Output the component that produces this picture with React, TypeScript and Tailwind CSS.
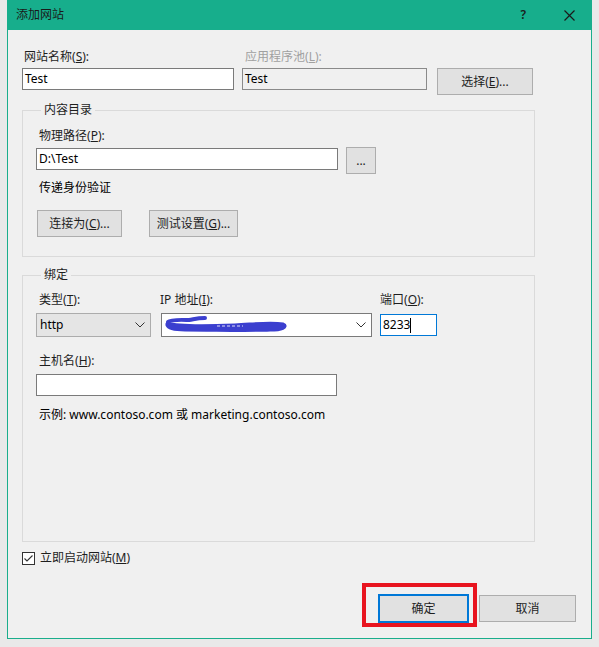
import React from 'react';

const Label = ({ text, k, tail = '):', dim = false, className = '' }: { text: string; k: string; tail?: string; dim?: boolean; className?: string }) => (
  <div className={`h-[16px] leading-[16px] whitespace-nowrap ${dim ? 'text-[#a0a0a0]' : 'text-[#1e1e1e]'} ${className}`}>
    {text}(<u>{k}</u>{tail}
  </div>
);

const Chevron = () => (
  <svg width="10" height="6" viewBox="0 0 10 6" className="shrink-0">
    <path d="M0.5 0.5 L5 5 L9.5 0.5" fill="none" stroke="#333" strokeWidth="1" />
  </svg>
);

function Btn({ children, className = '' }: { children: React.ReactNode; className?: string }) {
  return (
    <div className={`h-[27px] flex items-center justify-center bg-[#e1e1e1] border border-[#adadad] text-[#1e1e1e] whitespace-nowrap ${className}`}>
      {children}
    </div>
  );
}

export default function App() {
  return (
    <div className="w-[599px] h-[647px] bg-[#e9e9e9] overflow-hidden font-['Noto_Sans','Noto_Sans_CJK_SC',sans-serif] text-[12px]">
      <div className="ml-[7px] w-[585px] h-[639px] flex flex-col bg-[#f0f0f0] border-x border-b border-[#1aae8c]">
        {/* Title bar */}
        <div className="h-[30px] -mx-px bg-[#17ae8c] flex items-center pl-[9px] pr-[17px] text-[#1a1a1a]">
          <span className="text-[12px]">添加网站</span>
          <span className="ml-auto mr-[38px] text-[12px] font-semibold">?</span>
          <svg width="11" height="11" viewBox="0 0 11 11">
            <path d="M0.5 0.5 L10.5 10.5 M10.5 0.5 L0.5 10.5" stroke="#1a1a1a" strokeWidth="1.2" />
          </svg>
        </div>

        <div className="pl-[14px] flex flex-col">
          {/* Site name row */}
          <div className="mt-[19px] flex">
            <Label text="网站名称" k="S" className="ml-[2px] w-[218px]" />
            <Label text="应用程序池" k="L" dim className="ml-[3px]" />
          </div>
          <div className="mt-[3px] flex items-start">
            <div className="w-[212px] h-[22px] bg-white border border-[#7a7a7a] px-[2px] leading-[20px]">Test</div>
            <div className="ml-[8px] w-[185px] h-[22px] bg-[#f0f0f0] border border-[#8a8a8a] px-[2px] leading-[20px]">Test</div>
            <Btn className="ml-[10px] w-[96px]">
              选择(<u>E</u>)...
            </Btn>
          </div>

          {/* 内容目录 */}
          <fieldset className="mt-[7px] w-[513px] border border-[#dadada] px-[13px] pb-[19px]">
            <legend className="ml-[5px] px-[3px] h-[16px] leading-[16px] text-[#1e1e1e]">内容目录</legend>
            <Label text="物理路径" k="P" className="mt-[10px] ml-[3px]" />
            <div className="mt-[3px] flex items-start">
              <div className="mt-[1px] w-[302px] h-[22px] bg-white border border-[#7a7a7a] px-[2px] leading-[20px]">D:\Test</div>
              <Btn className="ml-[8px] w-[30px]">...</Btn>
            </div>
            <div className="mt-[6px] ml-[3px] h-[16px] leading-[16px]">传递身份验证</div>
            <div className="mt-[14px] flex">
              <Btn className="ml-[1px] w-[85px]">
                连接为(<u>C</u>)...
              </Btn>
              <Btn className="ml-[27px] w-[89px]">
                测试设置(<u>G</u>)...
              </Btn>
            </div>
          </fieldset>

          {/* 绑定 */}
          <fieldset className="mt-[10px] w-[513px] border border-[#dadada] px-[13px] pb-[118px]">
            <legend className="ml-[5px] px-[3px] h-[16px] leading-[16px] text-[#1e1e1e]">绑定</legend>
            <div className="mt-[9px] flex">
              <Label text="类型" k="T" className="ml-[3px] w-[121px]" />
              <Label text="IP 地址" k="I" className="w-[220px]" />
              <Label text="端口" k="O" />
            </div>
            <div className="mt-[5px] flex items-start">
              <div className="w-[115px] h-[24px] bg-[#e5e5e5] border border-[#acacac] flex items-center pl-[3px] pr-[5px]">
                <span>http</span>
                <span className="ml-auto"><Chevron /></span>
              </div>
              <div className="ml-[10px] w-[211px] h-[24px] bg-white border border-[#7a7a7a] flex items-center pl-[3px] pr-[5px]">
                <svg width="124" height="18" viewBox="0 0 124 18">
                  <path d="M3 6 C6 3, 20 4, 24 4 C30 3, 32 2, 40 2" stroke="#3b3fcf" strokeWidth="4" strokeLinecap="round" fill="none" />
                  <path d="M3 8 C10 11, 40 11, 70 10 C90 9, 105 7, 118 9 C121 10, 118 13, 105 13 C85 14, 50 13, 20 13 C10 13, 4 12, 3 9" stroke="#3b3fcf" strokeWidth="5" strokeLinecap="round" fill="#3b3fcf" />
                  <path d="M52 10 L78 10" stroke="#e0e0f8" strokeWidth="1" strokeDasharray="3 2" />
                </svg>
                <span className="ml-auto"><Chevron /></span>
              </div>
              <div className="ml-[8px] mt-[1px] w-[57px] h-[22px] bg-white border border-[#0078d7] px-[2px] leading-[20px] flex items-center">
                8233<span className="inline-block w-px h-[15px] bg-black" />
              </div>
            </div>
            <Label text="主机名" k="H" className="mt-[16px] ml-[3px]" />
            <div className="mt-[5px] w-[301px] h-[22px] bg-white border border-[#7a7a7a]" />
            <div className="mt-[11px] ml-[3px] h-[16px] leading-[16px] whitespace-nowrap">
              示例: www.contoso.com 或 marketing.contoso.com
            </div>
          </fieldset>

          {/* Checkbox */}
          <div className="mt-[8px] h-[16px] flex items-center">
            <svg width="13" height="13" viewBox="0 0 13 13">
              <rect x="0.5" y="0.5" width="12" height="12" fill="white" stroke="#333" />
              <path d="M2.5 6.5 L5 9 L10.5 3.5" fill="none" stroke="#333" strokeWidth="1.1" />
            </svg>
            <span className="ml-[5px] text-[#1e1e1e]">
              立即启动网站(<u>M</u>)
            </span>
          </div>

          {/* Buttons */}
          <div className="mt-[28px] flex pl-[356px]">
            <div className="relative">
              <div className="w-[91px] h-[29px] flex items-center justify-center bg-[#e1e1e1] border-2 border-[#0078d7] text-[#1e1e1e]">确定</div>
              <span className="absolute -left-[16px] -right-[8px] -top-[11px] -bottom-[4px] border-[4px] border-[#e8141f]" />
            </div>
            <Btn className="ml-[10px] mt-[1px] w-[97px]">取消</Btn>
          </div>
        </div>
      </div>
    </div>
  );
}
